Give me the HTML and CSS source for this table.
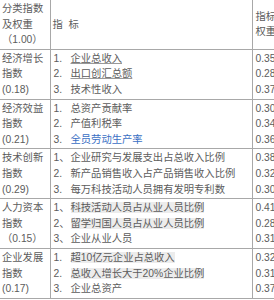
FILE: index.html
```html
<!DOCTYPE html>
<html lang="zh">
<head>
<meta charset="utf-8">
<link rel="stylesheet" href="styles.css">
</head>
<body>
<table class="idx">
  <colgroup><col class="c1"><col class="c2"><col class="c3"></colgroup>
  <tr class="head">
    <td class="cat">分类指数<br>及权重<br>（1.00）</td>
    <td class="mid">指&nbsp;&nbsp;标</td>
    <td class="mid w">指标<br>权重</td>
  </tr>
  <tr>
    <td class="cat">经济增长<br>指数<br>(0.18)</td>
    <td class="items">
      <div class="ln"><span class="n">1.</span><span class="u">企业总收入</span></div>
      <div class="ln"><span class="n">2.</span><span class="u">出口创汇总额</span></div>
      <div class="ln"><span class="n">3.</span>技术性收入</div>
    </td>
    <td class="w"><div>0.35</div><div>0.28</div><div>0.37</div></td>
  </tr>
  <tr>
    <td class="cat">经济效益<br>指数<br>(0.21)</td>
    <td class="items">
      <div class="ln"><span class="n">1.</span>总资产贡献率</div>
      <div class="ln"><span class="n">2.</span>产值利税率</div>
      <div class="ln"><span class="n">3.</span><span class="link">全员劳动生产率</span></div>
    </td>
    <td class="w"><div>0.30</div><div>0.34</div><div>0.36</div></td>
  </tr>
  <tr>
    <td class="cat">技术创新<br>指数<br>(0.29)</td>
    <td class="items">
      <div class="ln"><span class="n">1、</span>企业研究与发展支出占总收入比例</div>
      <div class="ln"><span class="n">2.</span>新产品销售收入占产品销售收入比例</div>
      <div class="ln"><span class="n">3.</span>每万科技活动人员拥有发明专利数</div>
    </td>
    <td class="w"><div>0.38</div><div>0.32</div><div>0.30</div></td>
  </tr>
  <tr>
    <td class="cat">人力资本<br>指数<br>（0.15）</td>
    <td class="items">
      <div class="ln"><span class="n">1、</span><span class="hl">科技活动人员占从业人员比例</span></div>
      <div class="ln"><span class="n">2、</span><span class="hl">留学归国人员占从业人员比例</span></div>
      <div class="ln"><span class="n">3、</span>企业从业人员</div>
    </td>
    <td class="w"><div>0.41</div><div>0.28</div><div>0.31</div></td>
  </tr>
  <tr>
    <td class="cat">企业发展<br>指数<br>(0.17)</td>
    <td class="items">
      <div class="ln"><span class="n">1.</span><span class="hl">超10亿元企业占总收入</span></div>
      <div class="ln"><span class="n">2.</span><span class="hl">总收入增长大于20%企业比例</span></div>
      <div class="ln"><span class="n">3.</span>企业总资产</div>
    </td>
    <td class="w"><div>0.32</div><div>0.31</div><div>0.37</div></td>
  </tr>
</table>
</body>
</html>
```

FILE: styles.css
```css
html, body {
  margin: 0;
  padding: 0;
  overflow: hidden;
  background: #fff;
}

.idx {
  border-collapse: collapse;
  table-layout: fixed;
  width: 300px;
  font-family: "Liberation Sans", "Noto Sans CJK SC", sans-serif;
  font-size: 10.3px;
  line-height: 15.6px;
  color: #5c5c5c;
}

.c1 { width: 50px; }
.c2 { width: 202px; }
.c3 { width: 48px; }

.idx td {
  padding: 1px 2px;
  vertical-align: top;
  border-bottom: 1px solid #a8a8a8;
  border-right: 1px solid #a8a8a8;
  white-space: nowrap;
  overflow: hidden;
}

.idx .mid {
  vertical-align: middle;
}

.idx td.w {
  border-right: none;
  padding-left: 3px;
}

.idx td.items {
  padding-left: 3px;
}

.n {
  display: inline-block;
  width: 17px;
}

.u {
  text-decoration: underline;
  text-decoration-color: #999;
}

.link {
  color: #3a6fc4;
}

.hl {
  background: #ececec;
}
```
